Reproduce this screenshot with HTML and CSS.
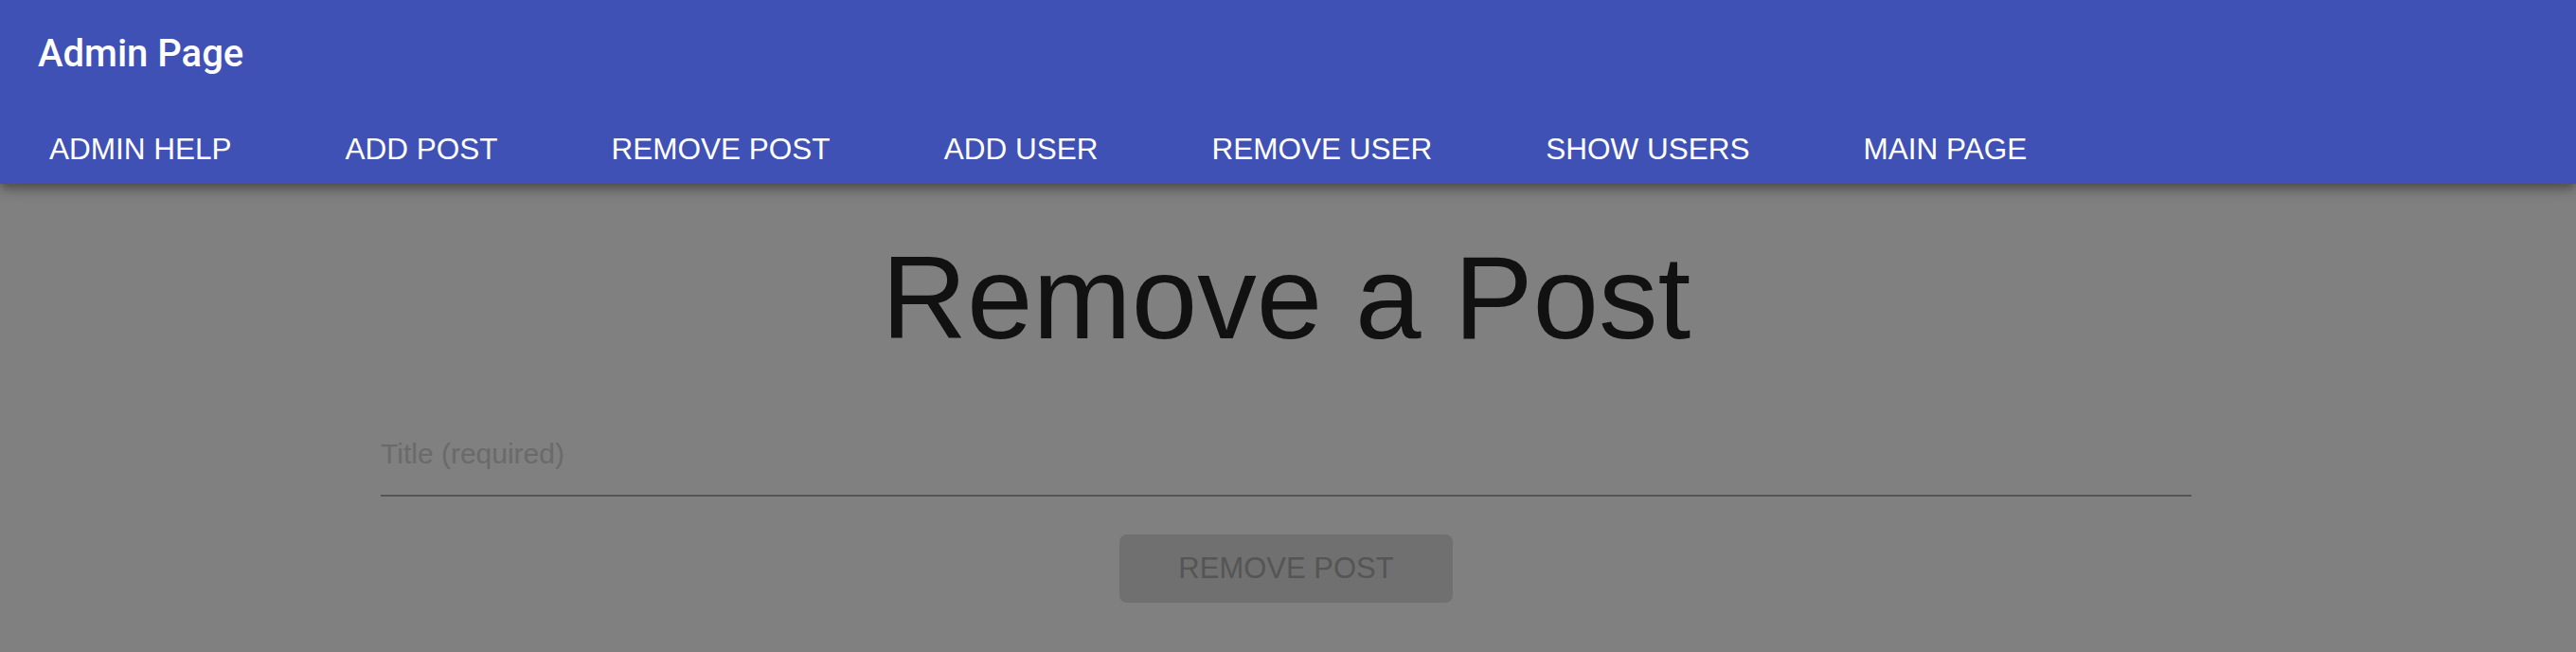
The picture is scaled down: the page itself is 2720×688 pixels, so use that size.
FILE: index.html
```html
<!DOCTYPE html>
<html lang="en">
<head>
<meta charset="utf-8">
<title>Admin Page</title>
<link rel="stylesheet" href="styles.css">
</head>
<body>
<header class="appbar">
  <div class="toolbar">
    <h6 class="brand">Admin Page</h6>
  </div>
  <nav class="nav">
    <a class="nav-item">ADMIN HELP</a>
    <a class="nav-item">ADD POST</a>
    <a class="nav-item">REMOVE POST</a>
    <a class="nav-item">ADD USER</a>
    <a class="nav-item">REMOVE USER</a>
    <a class="nav-item">SHOW USERS</a>
    <a class="nav-item">MAIN PAGE</a>
  </nav>
</header>
<main class="content">
  <h1 class="page-title">Remove a Post</h1>
  <div class="field">
    <span class="field-label">Title (required)</span>
  </div>
  <button class="submit" type="button">REMOVE POST</button>
</main>
</body>
</html>
```

FILE: styles.css
```css
html {
  background: #808080;
}
body {
  margin: 0;
  background: #808080;
  font-family: "Liberation Sans", Arial, sans-serif;
}
.appbar {
  position: relative;
  z-index: 2;
  background: #3f51b5;
  color: #ffffff;
  box-shadow: 0 4px 8px -2px rgba(0,0,0,0.25), 0 8px 10px 0 rgba(0,0,0,0.16), 0 2px 20px 0 rgba(0,0,0,0.12);
}
.toolbar {
  height: 112px;
  display: flex;
  align-items: center;
  padding-left: 40px;
}
.brand {
  margin: 0;
  font-family: Roboto, "Liberation Sans", sans-serif;
  font-weight: 500;
  font-size: 40px;
  line-height: normal;
  letter-spacing: 0;
}
.nav {
  height: 74px;
  padding-top: 8px;
  padding-left: 52px;
  display: flex;
  align-items: center;
  gap: 120px;
}
.nav-item {
  font-size: 31.5px;
  line-height: normal;
  color: #ffffff;
  white-space: nowrap;
  cursor: pointer;
}
.content {
  display: flex;
  flex-direction: column;
  align-items: center;
  padding-right: 4px;
}
.page-title {
  margin: 48px 0 0;
  font-size: 125px;
  font-weight: 400;
  line-height: normal;
  color: #111111;
}
.field {
  margin-top: 77px;
  width: 1912px;
  padding-bottom: 26px;
  border-bottom: 2px solid #555555;
}
.field-label {
  display: block;
  font-size: 30px;
  line-height: normal;
  color: #6a6a6a;
}
.submit {
  margin-top: 40px;
  width: 352px;
  height: 72px;
  border: none;
  border-radius: 8px;
  background: #707070;
  color: #555555;
  font-family: "Liberation Sans", Arial, sans-serif;
  font-size: 31px;
  padding: 0;
}
```
